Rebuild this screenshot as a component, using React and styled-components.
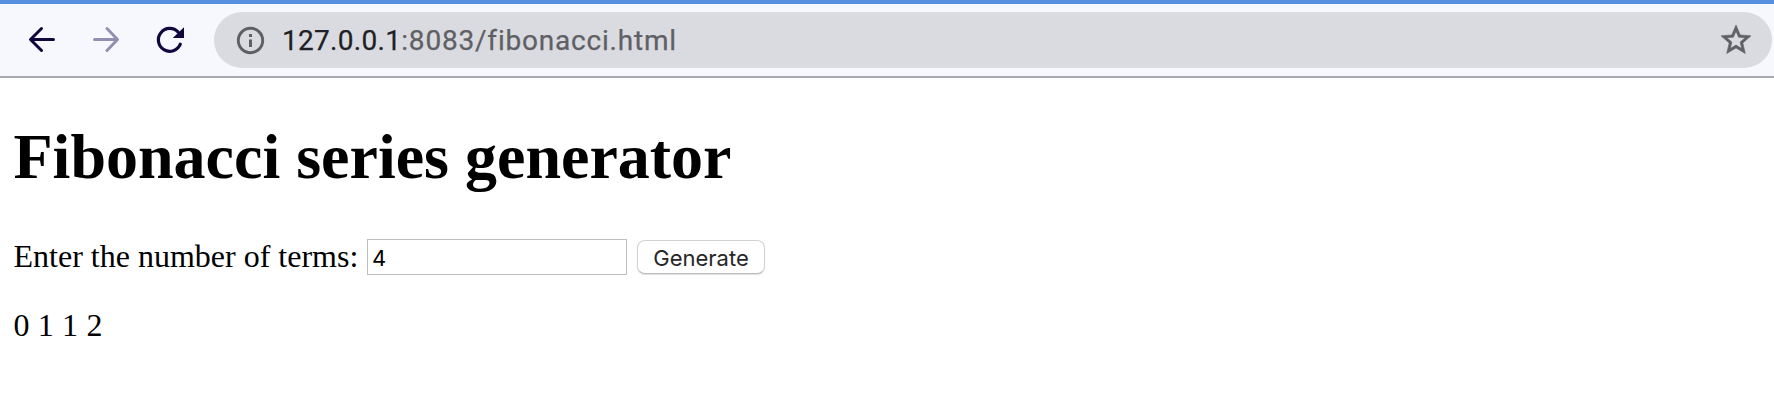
import React, { useState } from "react";
import styled, { createGlobalStyle } from "styled-components";

const GlobalStyle = createGlobalStyle`
  * { box-sizing: border-box; }
  body { margin: 0; background: #fff; overflow: hidden; }
`;

const Window = styled.div`
  height: 403px;
  display: flex;
  flex-direction: column;
`;

const Toolbar = styled.header`
  flex: none;
  height: 78px;
  display: flex;
  align-items: center;
  padding: 0 2px 0 24px;
  background: #f7f8fe;
  border-top: 4px solid #5790e1;
  border-bottom: 2px solid #a9abb0;
`;

const Navigation = styled.nav`
  flex: none;
  width: 190px;
  display: flex;
  gap: 28px;
`;

const NavButton = styled.button`
  width: 36px;
  height: 36px;
  padding: 0;
  border: 0;
  background: none;
  color: ${(p) => (p.$muted ? "#938fb2" : "#12063f")};
`;

const Icon = styled.svg`
  display: block;
  width: 36px;
  height: 36px;
  flex: none;
`;

const AddressBar = styled.div`
  flex: 1;
  height: 56px;
  display: flex;
  align-items: center;
  padding: 0 18px;
  border-radius: 28px;
  background: #dadbe0;
  color: #5f6063;
`;

const Address = styled.div`
  flex: 1;
  padding-top: 1px;
  margin-left: 14px;
  font: 28px/36px Roboto, sans-serif;
  letter-spacing: 0.8px;
  white-space: nowrap;
  -webkit-text-stroke: 0.25px currentColor;
`;

const Host = styled.span`
  color: #202124;
  letter-spacing: 0.3px;
`;

const Page = styled.main`
  padding: 42px 13.5px 0;
  color: #000;
  font: 32px/36px "Liberation Serif", "Times New Roman", serif;
`;

const Title = styled.h1`
  margin: 0 0 44px;
  font-size: 64px;
  line-height: 74px;
  font-weight: 700;
`;

const Form = styled.form`
  display: flex;
  align-items: center;
  height: 38px;
`;

const Label = styled.label`
  width: 353.5px;
  padding-bottom: 3px;
  white-space: nowrap;
`;

const NumberField = styled.input`
  width: 260px;
  height: 36px;
  padding: 2px 5px 0 4px;
  border: 1px solid #bfbfbf;
  border-radius: 0;
  outline: 0;
  background: #fff;
  color: #000;
  font: 22px Inter, sans-serif;
`;

const GenerateButton = styled.button`
  width: 128px;
  height: 34px;
  margin-left: 10px;
  padding: 2px 0 0;
  border: 1px solid #d2d2d2;
  border-bottom-color: #bdbdbd;
  border-radius: 8px;
  background: #fff;
  box-shadow: 0 1px 1px #0002;
  color: #272727;
  font: 22px/28px Inter, sans-serif;
  letter-spacing: 0;
`;

const Result = styled.p`
  margin: 31px 0 0;
  word-spacing: 0.3px;
`;

const fibonacci = (count) => {
  const terms = [];
  for (let i = 0; i < count; i++) terms.push(i < 2 ? i : terms[i - 1] + terms[i - 2]);
  return terms;
};

function ArrowIcon({ forward }) {
  return (
    <Icon viewBox="0 0 36 36" fill="none" stroke="currentColor" strokeWidth="3" strokeLinecap="round" strokeLinejoin="round">
      {forward ? (
        <path d="M6.5 17.5H29M19 6.5 29.5 17.5 19 28.5" />
      ) : (
        <path d="M29.5 17.5H7M17.5 6.5 6.5 17.5 17.5 28.5" />
      )}
    </Icon>
  );
}

function ReloadIcon() {
  return (
    <Icon viewBox="0 0 36 36">
      <path d="M26.2 10.2A11.4 11.4 0 1 0 28.3 22.2" fill="none" stroke="currentColor" strokeWidth="3.2" strokeLinecap="round" />
      <path d="M32 5.2V16H20.8Z" fill="currentColor" />
    </Icon>
  );
}

export default function App() {
  const [value, setValue] = useState("4");
  const [terms, setTerms] = useState(fibonacci(4));
  const generate = (event) => {
    event.preventDefault();
    setTerms(fibonacci(Math.max(0, Number(value) || 0)));
  };

  return (
    <Window>
      <GlobalStyle />
      <Toolbar>
        <Navigation>
          <NavButton aria-label="Back"><ArrowIcon /></NavButton>
          <NavButton $muted aria-label="Forward"><ArrowIcon forward /></NavButton>
          <NavButton aria-label="Reload"><ReloadIcon /></NavButton>
        </Navigation>
        <AddressBar>
          <Icon viewBox="0 0 36 36">
            <circle cx="18.5" cy="18.5" r="12.2" fill="none" stroke="currentColor" strokeWidth="2.9" />
            <path d="M17 12h3v3h-3zM17 17.5h3v7.5h-3z" fill="currentColor" />
          </Icon>
          <Address><Host>127.0.0.1</Host>:8083/fibonacci.html</Address>
          <Icon viewBox="0 0 24 24" fill="currentColor" stroke="currentColor" strokeWidth="0.4">
            <path d="m22 9.24-7.19-.62L12 2 9.19 8.63 2 9.24l5.46 4.73L5.82 21 12 17.27 18.18 21l-1.63-7.03L22 9.24zM12 15.4l-3.76 2.27 1-4.28-3.32-2.88 4.38-.38L12 6.1l1.71 4.04 4.38.38-3.32 2.88 1 4.28L12 15.4z" />
          </Icon>
        </AddressBar>
      </Toolbar>
      <Page>
        <Title>Fibonacci series generator</Title>
        <Form onSubmit={generate}>
          <Label htmlFor="terms">Enter the number of terms:</Label>
          <NumberField id="terms" value={value} onChange={(e) => setValue(e.target.value)} />
          <GenerateButton type="submit">Generate</GenerateButton>
        </Form>
        <Result>{terms.join(" ")}</Result>
      </Page>
    </Window>
  );
}
